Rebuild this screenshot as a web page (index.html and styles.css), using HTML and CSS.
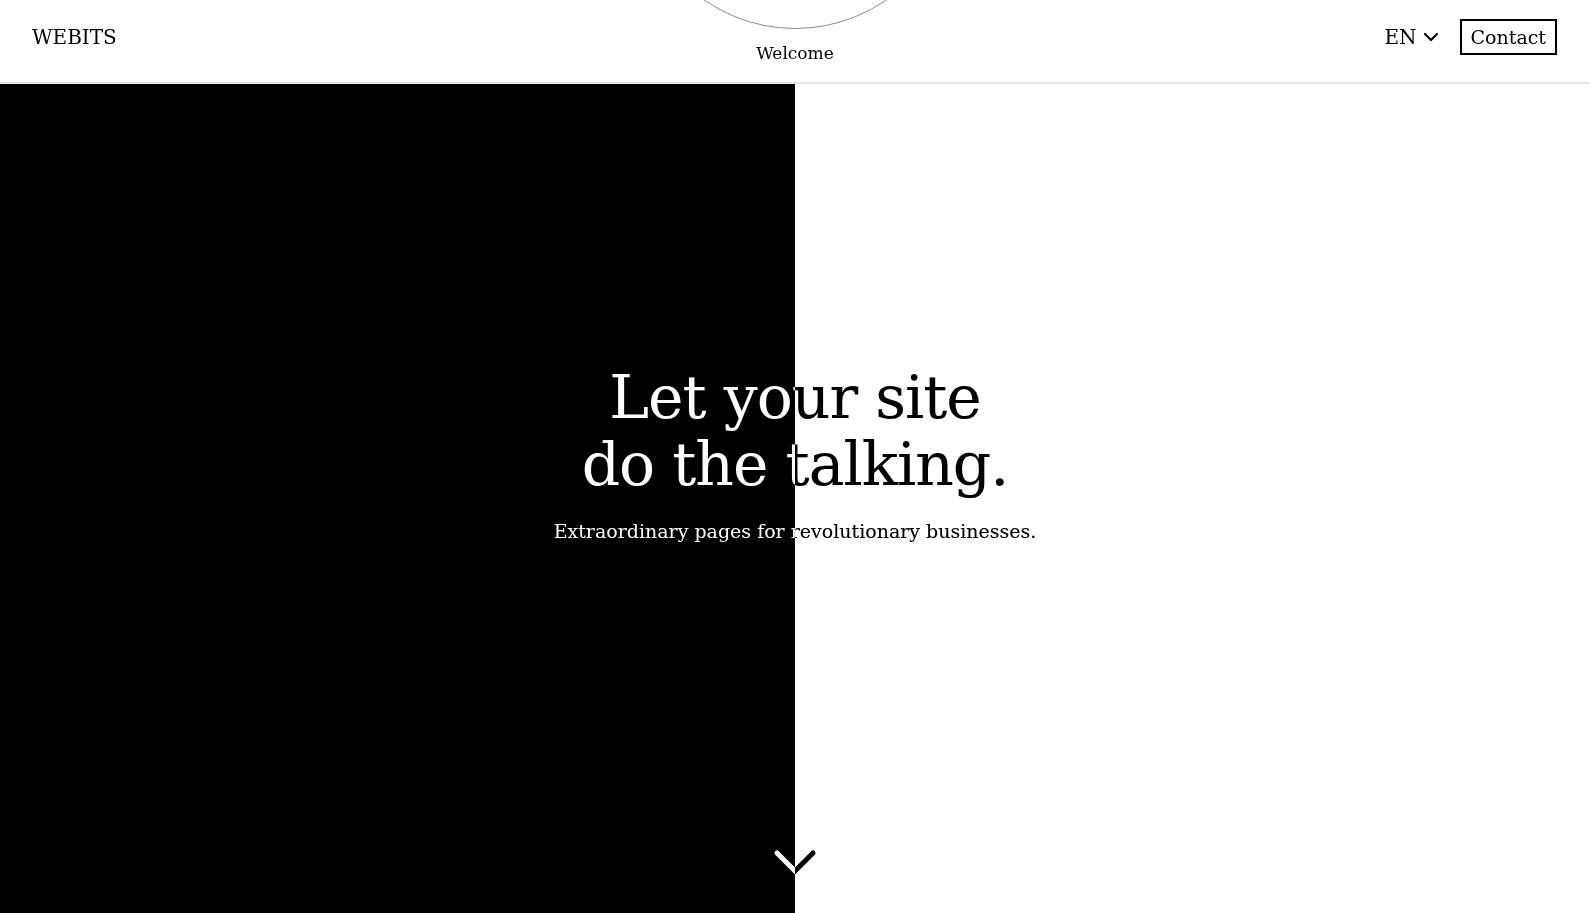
FILE: index.html
```html
<!DOCTYPE html>
<html lang="en">
<head>
<meta charset="utf-8">
<title>WEBITS</title>
<link rel="stylesheet" href="styles.css">
</head>
<body>
<header class="site-header">
  <a class="logo" href="#">WEBITS</a>
  <nav class="center-nav">
    <span class="nav-circle"></span>
    <a class="nav-welcome" href="#">Welcome</a>
  </nav>
  <div class="header-right">
    <button class="lang">EN
      <svg class="lang-caret" width="16" height="10" viewBox="0 0 16 10"><path d="M2 2 L8 8 L14 2" fill="none" stroke="#000" stroke-width="2.2" stroke-linecap="round" stroke-linejoin="round"/></svg>
    </button>
    <a class="contact" href="#">Contact</a>
  </div>
</header>
<main class="hero">
  <div class="hero-content">
    <h1 class="hero-title">Let your site<br>do the talking.</h1>
    <p class="hero-sub">Extraordinary pages for revolutionary businesses.</p>
  </div>
  <div class="hero-arrow">
    <svg width="44" height="28" viewBox="0 0 44 28"><path d="M4 6 L22 24 L40 6" fill="none" stroke="#fff" stroke-width="5" stroke-linecap="round" stroke-linejoin="miter"/></svg>
  </div>
</main>
</body>
</html>
```
FILE: styles.css
```css
* { box-sizing: border-box; }
html, body { margin: 0; padding: 0; }
body {
  font-family: "DejaVu Serif", "Liberation Serif", serif;
  color: #000;
  background: #fff;
  overflow: hidden;
  height: 913px;
}
a { color: inherit; text-decoration: none; }

.site-header {
  height: 84px;
  border-bottom: 2px solid #e4e4ea;
  display: flex;
  align-items: center;
  justify-content: space-between;
  padding: 0 33px 8px 32px;
  position: relative;
}
.logo {
  font-size: 20px;
}
.center-nav {
  position: absolute;
  left: 50%;
  top: 0;
  transform: translateX(-50%);
  height: 82px;
  display: flex;
  flex-direction: column;
  align-items: center;
  justify-content: flex-end;
  padding-bottom: 19px;
}
.nav-circle {
  position: absolute;
  width: 320px;
  height: 320px;
  border-radius: 50%;
  border: 1px solid #8a8b9c;
  left: 50%;
  top: -291px;
  transform: translateX(-50%);
}
.nav-welcome {
  font-size: 17px;
}
.header-right {
  display: flex;
  align-items: center;
  gap: 21px;
}
.lang {
  font-family: inherit;
  font-size: 20px;
  background: none;
  border: none;
  padding: 0;
  display: flex;
  align-items: center;
  gap: 6px;
  color: #000;
}
.contact {
  font-size: 19px;
  border: 2px solid #000;
  padding: 5px 9px 4px;
  line-height: 23px;
}

.hero {
  height: 829px;
  background: linear-gradient(to right, #000 50%, #fff 50%);
  position: relative;
  display: flex;
  flex-direction: column;
  align-items: center;
}
.hero-content {
  margin-top: 280px;
  text-align: center;
  color: #fff;
  mix-blend-mode: difference;
}
.hero-title {
  font-size: 60px;
  font-weight: 400;
  line-height: 67px;
  margin: 0;
  letter-spacing: -1px;
}
.hero-sub {
  font-size: 19px;
  margin: 22px 0 0;
}
.hero-arrow {
  position: absolute;
  bottom: 38px;
  left: 50%;
  transform: translateX(-50%);
  mix-blend-mode: difference;
  line-height: 0;
}
```
